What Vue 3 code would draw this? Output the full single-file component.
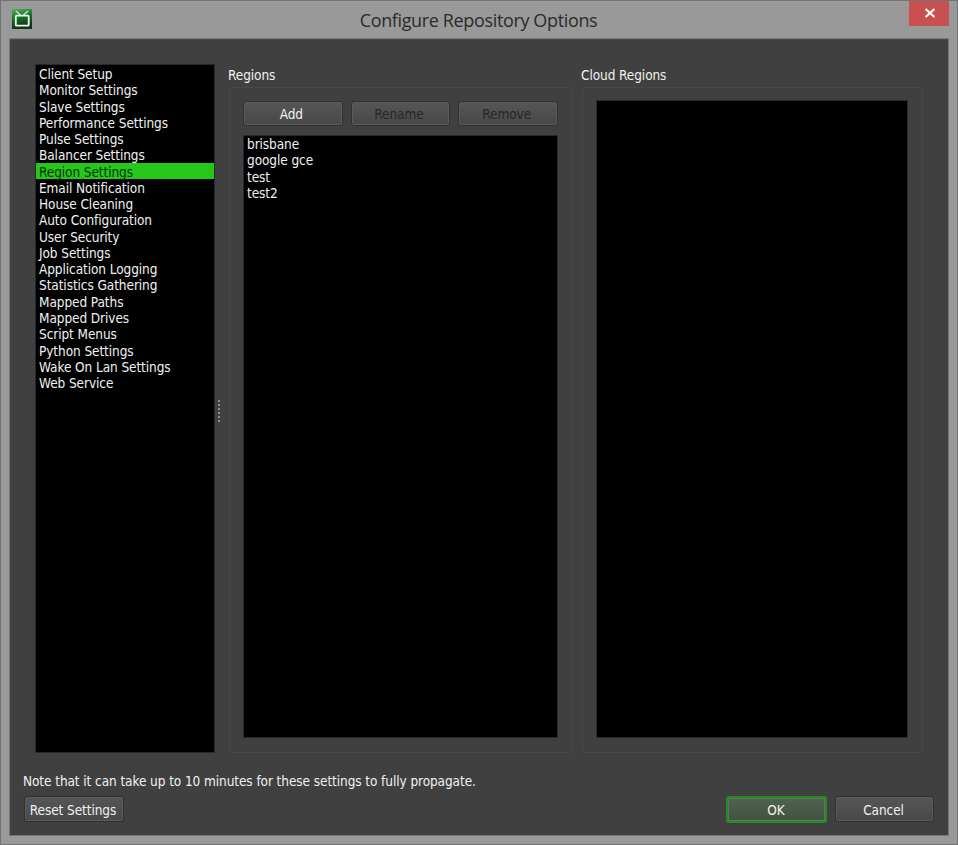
<script setup>
import { ref } from 'vue'

const pages = [
  'Client Setup', 'Monitor Settings', 'Slave Settings', 'Performance Settings',
  'Pulse Settings', 'Balancer Settings', 'Region Settings', 'Email Notification',
  'House Cleaning', 'Auto Configuration', 'User Security', 'Job Settings',
  'Application Logging', 'Statistics Gathering', 'Mapped Paths', 'Mapped Drives',
  'Script Menus', 'Python Settings', 'Wake On Lan Settings', 'Web Service',
]
const current = ref('Region Settings')
const regions = ['brisbane', 'google gce', 'test', 'test2']
</script>

<template>
  <div class="window">
    <header class="titlebar">
      <svg class="logo" viewBox="0 0 20 20" width="20" height="20">
        <defs>
          <linearGradient id="logoFill" x1="0" y1="0" x2="0.25" y2="1">
            <stop offset="0" stop-color="#55b064" />
            <stop offset="0.5" stop-color="#137023" />
            <stop offset="1" stop-color="#12301a" />
          </linearGradient>
        </defs>
        <rect width="20" height="20" fill="url(#logoFill)" />
        <path d="M4 2 L8.9 6.5 M16 2 L11.1 6.5" stroke="#c5e8c9" stroke-width="1.5" fill="none" />
        <rect x="3.8" y="6.7" width="12.9" height="10" rx="0.8" fill="none" stroke="#f1f7f1" stroke-width="1.8" />
      </svg>
      <h1 class="title">Configure Repository Options</h1>
      <button class="close" aria-label="Close">
        <svg viewBox="0 0 12 10" width="12" height="10">
          <path d="M1.6 1 L10.4 9 M10.4 1 L1.6 9" stroke="#fff" stroke-width="2.2" fill="none" />
        </svg>
      </button>
    </header>

    <main class="client">
      <div class="panes">
        <ul class="list pages">
          <li
            v-for="page in pages"
            :key="page"
            :class="{ selected: page === current }"
            @click="current = page"
          >{{ page }}</li>
        </ul>
        <div class="splitter"><i v-for="n in 6" :key="n"></i></div>
        <section class="group regions">
          <h2>Regions</h2>
          <div class="frame">
            <div class="tools">
              <button class="btn">Add</button>
              <button class="btn" disabled>Rename</button>
              <button class="btn" disabled>Remove</button>
            </div>
            <ul class="list">
              <li v-for="region in regions" :key="region">{{ region }}</li>
            </ul>
          </div>
        </section>
        <section class="group cloud">
          <h2>Cloud Regions</h2>
          <div class="frame"><ul class="list"></ul></div>
        </section>
      </div>
      <p class="note">Note that it can take up to 10 minutes for these settings to fully propagate.</p>
      <footer class="actions">
        <button class="btn reset">Reset Settings</button>
        <button class="btn ok">OK</button>
        <button class="btn cancel">Cancel</button>
      </footer>
    </main>
  </div>
</template>

<style>
body { background: #999; }
</style>

<style scoped>
* { box-sizing: border-box; margin: 0; padding: 0; }
.window {
  width: 958px;
  height: 845px;
  display: flex;
  flex-direction: column;
  border: 1px solid #727272;
  background: #999;
  padding: 0 8px 8px;
  font: 13.5px/16.27px "DejaVu Sans Condensed", "DejaVu Sans", sans-serif;
  font-stretch: condensed;
  letter-spacing: -0.08px;
  color: #f0f0f0;
}
.titlebar { height: 37px; display: flex; align-items: flex-start; padding-left: 3px; flex: none; }
.logo { margin-top: 8px; flex: none; }
.title {
  flex: 1;
  padding: 7px 0 0 16px;
  text-align: center;
  font: 400 18px/24px "Open Sans", sans-serif;
  letter-spacing: -0.36px;
  color: #2b2b2b;
}
.close {
  width: 40px;
  height: 25px;
  flex: none;
  display: flex;
  align-items: center;
  justify-content: center;
  padding: 0 0 2px 1px;
  border: 0;
  background: #c85050;
}
.client {
  flex: 1;
  display: flex;
  flex-direction: column;
  border: 1px solid #777;
  background: #404040;
  padding: 25px 14px 12px;
  box-shadow: inset 0 1px #4a4a4a;
}
.panes { display: flex; height: 689px; padding-left: 11px; }
.list {
  list-style: none;
  background: #000;
  border: 1px solid #292929;
  white-space: nowrap;
  cursor: default;
}
.list li { padding-left: 3px; }
.pages { width: 180px; flex: none; }
.pages li { height: 16.27px; line-height: 18px; }
.selected { background: #24c71a; color: #07330a; }
.splitter {
  width: 14px;
  display: flex;
  flex-direction: column;
  gap: 2px;
  padding: 336px 0 0 3px;
}
.splitter i { width: 2px; height: 2px; background: #898989; }
.group { display: flex; flex-direction: column; }
.group h2 { height: 23px; margin-left: -1px; font: inherit; line-height: 22px; }
.regions { width: 344px; margin-right: 9px; }
.cloud { width: 341px; }
.frame {
  flex: 1;
  display: flex;
  flex-direction: column;
  gap: 9px;
  border: 1px solid #484848;
  border-radius: 3px;
  padding: 12px 14px 14px 13px;
}
.frame .list { flex: 1; }
.tools { display: flex; gap: 8px; margin-top: 1px; }
.tools .btn { flex: 1; height: 25px; padding: 1px 3px 0 0; }
.btn {
  height: 26px;
  padding-top: 1px;
  font: inherit;
  letter-spacing: inherit;
  line-height: 22px;
  color: #f0f0f0;
  border: 1px solid #303030;
  border-radius: 3px;
  background: linear-gradient(#565656, #484848);
  box-shadow: inset 0 0 0 1px #5c5c5c;
}
.btn:disabled { color: #272727; }
.note { margin: 18px 0 0 -1px; line-height: 20px; white-space: nowrap; }
.actions { display: flex; margin-top: 5px; }
.reset { width: 100px; margin-right: auto; padding-right: 2px; }
.ok {
  width: 101px;
  height: 27px;
  margin-right: 8px;
  padding-right: 1px;
  border: 2px solid #228e20;
  background: linear-gradient(#50634f, #435241);
  box-shadow: inset 0 0 0 1px #5f755e;
}
.cancel { width: 99px; padding-right: 2px; }
</style>
